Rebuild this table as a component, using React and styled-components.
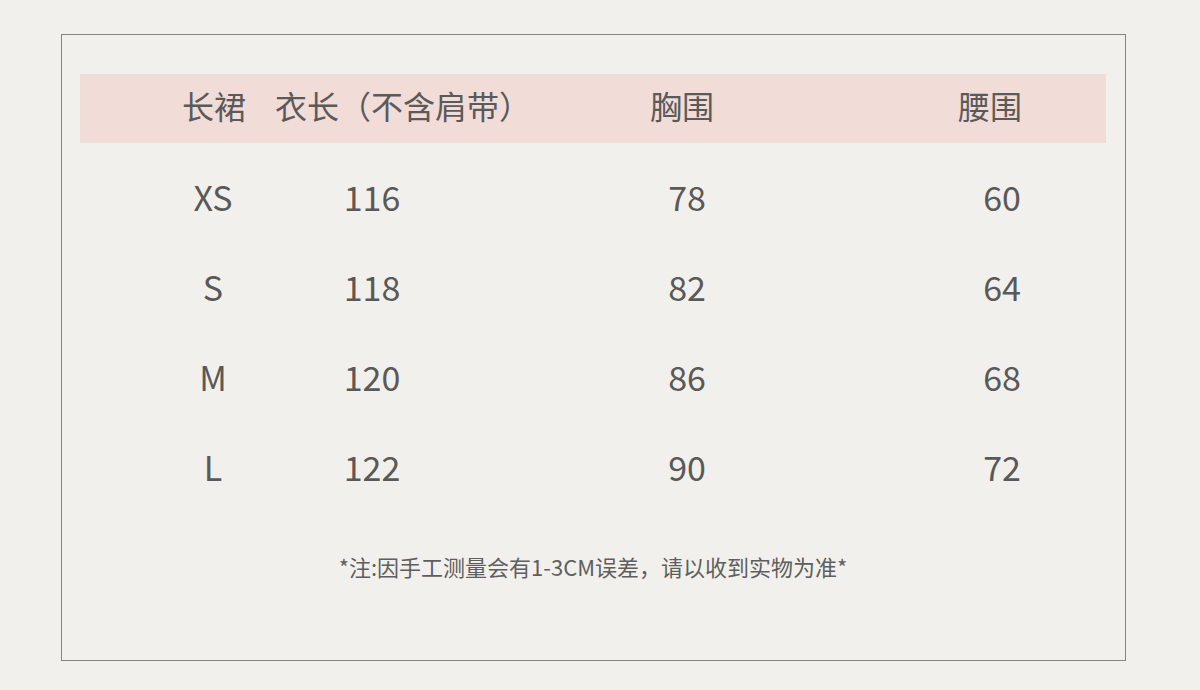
import React from 'react';
import styled, { createGlobalStyle } from 'styled-components';

const GlobalStyle = createGlobalStyle`
  html, body {
    margin: 0;
    padding: 0;
    background: #f2f0ec;
  }
  body {
    font-family: 'Noto Sans CJK SC', 'Noto Sans', sans-serif;
    color: #595959;
  }
`;

const Page = styled.div`
  width: 1200px;
  height: 690px;
  padding: 34px 0 0 61px;
  box-sizing: border-box;
`;

const Frame = styled.div`
  width: 1065px;
  height: 627px;
  box-sizing: border-box;
  border: 1px solid #85847e;
  padding: 39px 19px 0 18px;
  display: flex;
  flex-direction: column;
`;

const HeaderBar = styled.div`
  height: 69px;
  box-sizing: border-box;
  padding: 0 0 7px 94px;
  background: #f1dcd8;
  display: grid;
  grid-template-columns: 80px 298px 260px 356px;
  align-items: center;
  font-size: 32px;
  color: #5a5a5a;
`;

const HeaderCell = styled.div`
  text-align: center;
  white-space: nowrap;
  line-height: 1;
`;

const Rows = styled.div`
  margin-top: 9px;
  display: flex;
  flex-direction: column;
`;

const Row = styled.div`
  height: 90px;
  display: grid;
  grid-template-columns: 120px 198px 432px 198px;
  padding-left: 73px;
  align-items: center;
  font-size: 34px;
`;

const Cell = styled.div`
  text-align: center;
  line-height: 1;
`;

const Note = styled.div`
  margin-top: 40px;
  text-align: center;
  font-size: 22px;
  line-height: 28px;
  color: #5e5e5e;
`;

const sizes = [
  ['XS', 116, 78, 60],
  ['S', 118, 82, 64],
  ['M', 120, 86, 68],
  ['L', 122, 90, 72],
];

export default function App() {
  return (
    <Page>
      <GlobalStyle />
      <Frame>
        <HeaderBar>
          <HeaderCell>长裙</HeaderCell>
          <HeaderCell>衣长（不含肩带）</HeaderCell>
          <HeaderCell>胸围</HeaderCell>
          <HeaderCell>腰围</HeaderCell>
        </HeaderBar>
        <Rows>
          {sizes.map((row) => (
            <Row key={row[0]}>
              {row.map((v, i) => (
                <Cell key={i}>{v}</Cell>
              ))}
            </Row>
          ))}
        </Rows>
        <Note>*注:因手工测量会有1-3CM误差，请以收到实物为准*</Note>
      </Frame>
    </Page>
  );
}
